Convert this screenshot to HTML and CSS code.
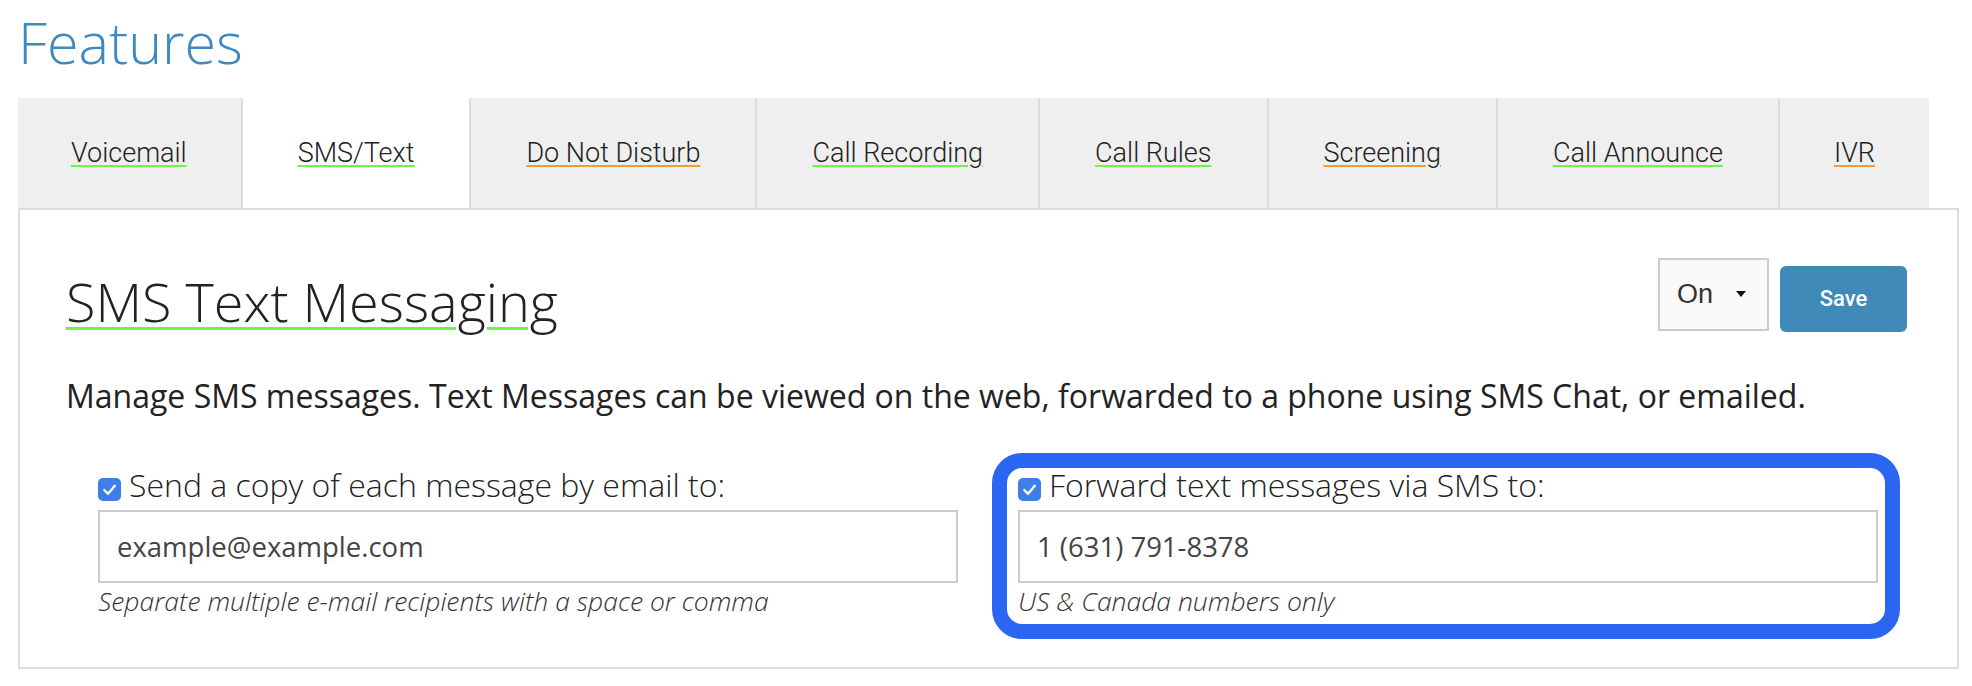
FILE: index.html
```html
<!DOCTYPE html>
<html lang="en">
<head>
<meta charset="utf-8">
<title>Features</title>
<link rel="stylesheet" href="styles.css">
</head>
<body>
<div class="page">
  <h1 class="page-title">Features</h1>
  <nav class="tabs">
    <a class="tab ok first">Voicemail</a>
    <a class="tab ok active">SMS/Text</a>
    <a class="tab warn">Do Not Disturb</a>
    <a class="tab ok">Call Recording</a>
    <a class="tab ok">Call Rules</a>
    <a class="tab warn">Screening</a>
    <a class="tab ok">Call Announce</a>
    <a class="tab warn last">IVR</a>
  </nav>
  <section class="panel">
    <div class="panel-head">
      <h2 class="panel-title">SMS Text Messaging</h2>
      <div class="actions">
        <div class="select">On <span class="caret"></span></div>
        <button class="save">Save</button>
      </div>
    </div>
    <p class="desc">Manage SMS messages. Text Messages can be viewed on the web, forwarded to a phone using SMS Chat, or emailed.</p>
    <div class="cols">
      <div class="col">
        <label class="check-row"><span class="checkbox"><svg viewBox="0 0 24 24" width="23" height="23"><path d="M6.5 12.5 L10.5 16.5 L17.5 8" fill="none" stroke="#fff" stroke-width="2.4" stroke-linecap="round" stroke-linejoin="round"/></svg></span><span class="check-label">Send a copy of each message by email to:</span></label>
        <div class="field">example@example.com</div>
        <div class="help">Separate multiple e-mail recipients with a space or comma</div>
      </div>
      <div class="col highlighted">
        <label class="check-row"><span class="checkbox"><svg viewBox="0 0 24 24" width="23" height="23"><path d="M6.5 12.5 L10.5 16.5 L17.5 8" fill="none" stroke="#fff" stroke-width="2.4" stroke-linecap="round" stroke-linejoin="round"/></svg></span><span class="check-label">Forward text messages via SMS to:</span></label>
        <div class="field">1 (631) 791-8378</div>
        <div class="help">US &amp; Canada numbers only</div>
      </div>
    </div>
  </section>
</div>
</body>
</html>
```

FILE: styles.css
```css
html, body {
  margin: 0;
  padding: 0;
  background: #fff;
}

.page {
  padding: 0 13px 0 18px;
  font-family: "Open Sans", "Liberation Sans", sans-serif;
  color: #222;
}

.page-title {
  margin: 14px 0 26px 0;
  font-size: 57.5px;
  line-height: 1;
  font-weight: 300;
  color: #3d8ac0;
}

.tabs {
  display: flex;
  height: 110px;
}

.tab {
  display: flex;
  align-items: center;
  padding: 0 55px;
  background: #efefef;
  border-right: 2px solid #dddddd;
  font-family: "Roboto", "Liberation Sans", sans-serif;
  font-weight: 300;
  font-size: 27px;
  color: #222;
  text-decoration: underline;
  text-decoration-thickness: 2px;
  text-underline-offset: 3px;
}

.tab.ok { text-decoration-color: #6ef24e; }
.tab.warn { text-decoration-color: #f2993a; }
.tab.active { background: #fff; }
.tab.first { padding: 0 54px 0 53px; }
.tab.last { border-right: none; padding: 0 54px; }

.panel {
  border: 2px solid #dddddd;
  padding: 0 50px 53px 46px;
}

.panel-head {
  display: flex;
  align-items: flex-end;
  justify-content: space-between;
  padding-top: 48px;
}

.panel-title {
  margin: 0 0 4px 0;
  font-size: 54px;
  line-height: 1;
  font-weight: 300;
  color: #222;
  text-decoration: underline;
  text-decoration-color: #6ef24e;
  text-decoration-thickness: 3px;
  text-underline-offset: 5px;
}

.actions {
  display: flex;
  align-items: flex-end;
  gap: 11px;
}

.select {
  box-sizing: border-box;
  width: 111px;
  height: 73px;
  border: 2px solid #cccccc;
  background: #f9f9f9;
  display: flex;
  align-items: center;
  padding-left: 17px;
  gap: 23px;
  font-family: "Liberation Sans", Arial, sans-serif;
  font-size: 27px;
  color: #333;
  margin-bottom: 1px;
}

.caret {
  width: 0;
  height: 0;
  border-left: 5px solid transparent;
  border-right: 5px solid transparent;
  border-top: 6px solid #111;
}

.save {
  width: 127px;
  height: 66px;
  border: none;
  border-radius: 6px;
  background: #3f8ab8;
  color: #fff;
  font-family: "Roboto", "Liberation Sans", sans-serif;
  font-weight: 500;
  font-size: 22px;
}

.desc {
  margin: 48px 0 0 0;
  font-size: 32px;
  line-height: 1;
  font-weight: 400;
  color: #222;
}

.cols {
  display: grid;
  grid-template-columns: 860px 860px;
  column-gap: 60px;
  padding-left: 32px;
  margin-top: 57px;
}

.col {
  position: relative;
}

.highlighted::before {
  content: "";
  position: absolute;
  left: -26px;
  right: -22px;
  top: -16px;
  bottom: -25px;
  border: 15px solid #2a66f2;
  border-radius: 30px;
  pointer-events: none;
}

.check-row {
  display: flex;
  align-items: flex-start;
  gap: 8px;
}

.checkbox {
  width: 23px;
  height: 23px;
  margin-top: 9px;
  border-radius: 5px;
  background: #3f7ee8;
  display: flex;
  flex: none;
}

.check-label {
  font-size: 32px;
  line-height: 1;
  font-weight: 300;
  color: #222;
}

.field {
  box-sizing: border-box;
  margin-top: 9px;
  height: 73px;
  border: 2px solid #cccccc;
  padding-left: 17px;
  display: flex;
  align-items: center;
  font-size: 27.5px;
  color: #444;
}

.help {
  margin-top: 5px;
  font-size: 26.5px;
  line-height: 1;
  font-weight: 300;
  font-style: italic;
  color: #333;
}
```
